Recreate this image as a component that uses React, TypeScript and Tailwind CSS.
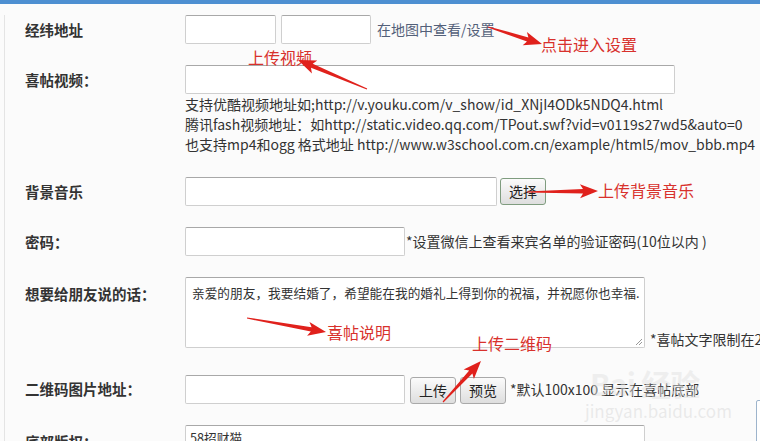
import React from "react";

const font = { fontFamily: '"Noto Sans CJK SC", "Noto Sans", sans-serif' };

// red hand-drawn style arrows: tail -> tip
const arrows = [
  { x1: 488, y1: 27, x2: 542, y2: 44 },
  { x1: 367, y1: 89, x2: 298, y2: 60 },
  { x1: 527, y1: 192, x2: 598, y2: 191 },
  { x1: 247, y1: 318, x2: 326, y2: 332 },
  { x1: 443, y1: 402, x2: 481, y2: 361 },
];

const arrowPoints = (x1: number, y1: number, x2: number, y2: number) => {
  const dx = x2 - x1;
  const dy = y2 - y1;
  const len = Math.hypot(dx, dy);
  const ux = dx / len;
  const uy = dy / len;
  const nx = -uy;
  const ny = ux;
  const headLen = 15;
  const bx = x2 - ux * headLen;
  const by = y2 - uy * headLen;
  const p = (x: number, y: number) => `${x.toFixed(1)},${y.toFixed(1)}`;
  return [
    p(x1 + nx * 0.6, y1 + ny * 0.6),
    p(bx + nx * 2.2, by + ny * 2.2),
    p(bx - ux * 3 + nx * 7, by - uy * 3 + ny * 7),
    p(x2, y2),
    p(bx - ux * 3 - nx * 7, by - uy * 3 - ny * 7),
    p(bx - nx * 2.2, by - ny * 2.2),
    p(x1 - nx * 0.6, y1 - ny * 0.6),
  ].join(" ");
};

const Label = ({ children }: { children: React.ReactNode }) => (
  <div className="w-[180px] shrink-0 pl-[20px] text-[14.5px] font-bold text-[#333]">{children}</div>
);

const inputCls =
  "h-[29px] border border-[#cfcfcf] border-t-[#a8a8a8] bg-white rounded-[2px] shrink-0";

const Btn = ({ children, green }: { children: React.ReactNode; green?: boolean }) => (
  <div
    className={`h-[27px] w-[46px] shrink-0 flex items-center justify-center rounded-[3px] border text-[14px] text-[#222] bg-gradient-to-b from-[#fbfbfb] to-[#dedede] ${
      green ? "border-[#7f9c7f]" : "border-[#a9a9a9]"
    }`}
  >
    {children}
  </div>
);

const Note = ({ children, x, y }: { children: React.ReactNode; x: number; y: number }) => (
  <div className="absolute text-[16px] leading-none text-[#d8312c] whitespace-nowrap" style={{ left: x, top: y }}>
    {children}
  </div>
);

export default function App() {
  return (
    <div className="relative w-[760px] h-[441px] overflow-hidden bg-[#fbfbfb]" style={font}>
      <div className="h-[4px] bg-[#4d8fd1]" />
      <div className="ml-[4px] h-[437px] border-l border-[#e4e4e4]">
        {/* 经纬地址 */}
        <div className="flex items-center mt-[11px]">
          <Label>经纬地址</Label>
          <div className="flex items-center gap-[5px]">
            <div className={`${inputCls} w-[91px]`} />
            <div className={`${inputCls} w-[90px]`} />
            <span className="ml-[1px] text-[14px] text-[#536079]">在地图中查看/设置</span>
          </div>
        </div>

        {/* 喜帖视频 */}
        <div className="flex items-center mt-[21px]">
          <Label>喜帖视频：</Label>
          <div className={`${inputCls} w-[490px]`} />
        </div>
        <div className="pl-[180px] text-[14px] leading-[20px] text-[#333] whitespace-nowrap">
          <div>支持优酷视频地址如;http://v.youku.com/v_show/id_XNjI4ODk5NDQ4.html</div>
          <div>腾讯fash视频地址：如http://static.video.qq.com/TPout.swf?vid=v0119s27wd5&amp;auto=0</div>
          <div>也支持mp4和ogg 格式地址 http://www.w3school.com.cn/example/html5/mov_bbb.mp4</div>
        </div>

        {/* 背景音乐 */}
        <div className="flex items-center mt-[23px]">
          <Label>背景音乐</Label>
          <div className={`${inputCls} w-[312px]`} />
          <div className="ml-[3px]">
            <Btn green>选择</Btn>
          </div>
        </div>

        {/* 密码 */}
        <div className="flex items-center mt-[21px]">
          <Label>密码：</Label>
          <div className={`${inputCls} w-[220px]`} />
          <span className="ml-[1px] text-[14px] text-[#333] whitespace-nowrap">*设置微信上查看来宾名单的验证密码(10位以内 )</span>
        </div>

        {/* 想要给朋友说的话 */}
        <div className="flex items-start mt-[21px]">
          <div className="pt-[6px]">
            <Label>想要给朋友说的话：</Label>
          </div>
          <div className="relative w-[460px] h-[71px] shrink-0 border border-[#cfcfcf] border-t-[#a8a8a8] bg-white rounded-[2px] px-[6px] pt-[7px] text-[12.7px] leading-[16px] text-[#333] whitespace-nowrap">
            亲爱的朋友，我要结婚了，希望能在我的婚礼上得到你的祝福，并祝愿你也幸福.
            <svg className="absolute right-[1px] bottom-[1px]" width="8" height="8" viewBox="0 0 8 8">
              <path d="M7 1 L1 7 M7 4 L4 7" stroke="#999" strokeWidth="1" />
            </svg>
          </div>
          <span className="self-end ml-[5px] mb-[-2px] text-[14px] text-[#333] whitespace-nowrap">*喜帖文字限制在200字以内</span>
        </div>

        {/* 二维码图片地址 */}
        <div className="flex items-center mt-[26px]">
          <Label>二维码图片地址：</Label>
          <div className={`${inputCls} w-[220px]`} />
          <div className="ml-[5px] mt-[3px] flex gap-[4px]">
            <Btn>上传</Btn>
            <Btn>预览</Btn>
          </div>
          <span className="ml-[4px] text-[14px] text-[#333] whitespace-nowrap">*默认100x100 显示在喜帖底部</span>
        </div>

        {/* 底部版权 */}
        <div className="flex items-start mt-[21px]">
          <div className="pt-[6px]">
            <Label>底部版权：</Label>
          </div>
          <div className="w-[460px] h-[40px] shrink-0 border border-[#cfcfcf] border-t-[#a8a8a8] bg-white rounded-[2px] px-[4px] pt-[2px] text-[12.7px] text-[#333]">
            58招财猫
          </div>
        </div>
      </div>

      {/* annotations */}
      <Note x={541} y={36}>点击进入设置</Note>
      <Note x={248} y={49}>上传视频</Note>
      <Note x={598} y={182}>上传背景音乐</Note>
      <Note x={327} y={324}>喜帖说明</Note>
      <Note x={472} y={335}>上传二维码</Note>
      <svg className="absolute inset-0 pointer-events-none" width="760" height="441">
        {arrows.map((a, i) => (
          <polygon key={i} points={arrowPoints(a.x1, a.y1, a.x2, a.y2)} fill="#e0211c" />
        ))}
      </svg>

      {/* watermark */}
      <div className="absolute left-[590px] top-[368px] text-[30px] font-bold leading-none text-[#e2e2e2]/50 tracking-tight pointer-events-none">
        Bai 经验
      </div>
      <div className="absolute left-[585px] top-[402px] text-[17px] leading-none text-[#dedede]/60 pointer-events-none">
        jingyan.baidu.com
      </div>
      <div className="absolute left-[756px] top-[400px] w-[8px] h-[50px] border border-[#9db4cc] bg-white rounded-[2px]" />
    </div>
  );
}
